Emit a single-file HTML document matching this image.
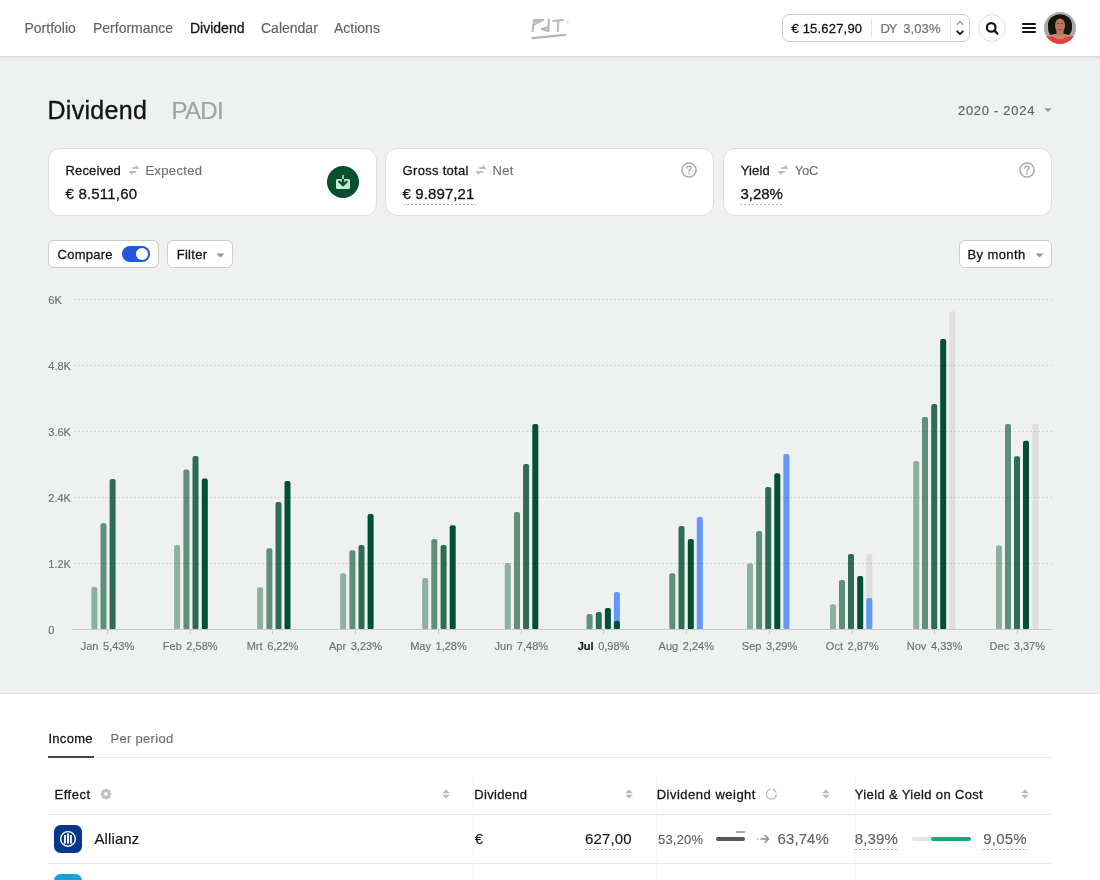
<!DOCTYPE html>
<html><head><meta charset="utf-8"><title>Dividend</title>
<style>
html,body{margin:0;padding:0;}
body{width:1100px;height:880px;overflow:hidden;position:relative;background:#fff;font-family:"Liberation Sans", sans-serif;}
.t{position:absolute;white-space:pre;line-height:1;font-family:"Liberation Sans", sans-serif;-webkit-text-stroke:0.15px currentColor;}
#root{position:absolute;left:0;top:0;width:1100px;height:880px;will-change:transform;}
</style></head><body><div id="root">
<div style="position:absolute;left:0px;top:0px;width:1100px;height:56px;background:#fff;"></div>
<div style="position:absolute;left:0px;top:56px;width:1100px;height:1px;background:#d7d9d9;"></div>
<div class="t" style="left:24.50px;top:21.15px;font-size:14px;color:#5c6368;font-weight:400;letter-spacing:0px;">Portfolio</div>
<div class="t" style="left:93.00px;top:21.15px;font-size:14px;color:#5c6368;font-weight:400;letter-spacing:0px;">Performance</div>
<div class="t" style="left:190.00px;top:21.15px;font-size:14px;color:#121416;font-weight:400;letter-spacing:0px;-webkit-text-stroke:0.28px currentColor;">Dividend</div>
<div class="t" style="left:261.00px;top:21.15px;font-size:14px;color:#5c6368;font-weight:400;letter-spacing:0px;">Calendar</div>
<div class="t" style="left:334.00px;top:21.15px;font-size:14px;color:#5c6368;font-weight:400;letter-spacing:0px;">Actions</div>
<svg style="position:absolute;left:525px;top:12px" width="50" height="32" viewBox="525 12 50 32" fill="none" stroke="#b3b6b7" stroke-width="1.9" stroke-linecap="round" stroke-linejoin="round">
<path d="M534 20.2 L532.6 31.2"/><path d="M534 20.1 L543.2 20 L533.4 24.9"/><path d="M535 21.3 L540 21" stroke-width="1.2"/>
<path d="M548.8 19.6 L548.4 31.2 L541.8 29 L548.4 26.9"/>
<path d="M553.4 21 L563.2 19.9"/><path d="M558.4 20.8 L557.7 31.3"/>
<path d="M532.4 38.1 L565.2 34.9" stroke-width="2.1"/>
<circle cx="567.8" cy="22" r="0.8" fill="#b3b6b7" stroke="none"/>
</svg>
<div style="position:absolute;left:782px;top:14px;width:186px;height:26px;border:1px solid #c9cbcc;border-radius:7px;background:#fff;"></div>
<div class="t" style="left:791.40px;top:21.90px;font-size:13px;color:#121416;font-weight:400;letter-spacing:0.2px;-webkit-text-stroke:0.28px currentColor;">€ 15.627,90</div>
<div style="position:absolute;left:871px;top:19px;width:1px;height:18px;background:#e3e4e5;"></div>
<div class="t" style="left:880.50px;top:21.90px;font-size:13px;color:#6a7176;font-weight:400;letter-spacing:-1.2px;">DY</div>
<div class="t" style="left:903.20px;top:21.90px;font-size:13px;color:#6a7176;font-weight:400;letter-spacing:0.1px;">3,03%</div>
<div style="position:absolute;left:950px;top:19px;width:1px;height:18px;background:#e3e4e5;"></div>
<svg style="position:absolute;left:955px;top:19px" width="10" height="18" viewBox="0 0 10 18" fill="none" stroke-linecap="round" stroke-linejoin="round">
<path d="M2.2 5.5 L5 2.6 L7.8 5.5" stroke="#9b9fa2" stroke-width="1.4"/>
<path d="M2.2 12.3 L5 15.2 L7.8 12.3" stroke="#111" stroke-width="1.8"/>
</svg>
<div style="position:absolute;left:978px;top:14px;width:26px;height:26px;border:1px solid #dcdede;border-radius:50%;background:#fff;"></div>
<svg style="position:absolute;left:984px;top:20px" width="16" height="16" viewBox="0 0 16 16" fill="none" stroke="#111" stroke-width="2.2" stroke-linecap="round">
<circle cx="7.2" cy="7.4" r="4.3"/><path d="M10.4 10.6 L13.4 13.6"/></svg>
<div style="position:absolute;left:1022px;top:23px;width:14px;height:2.2px;background:#111;border-radius:1px;"></div>
<div style="position:absolute;left:1022px;top:27px;width:14px;height:2.2px;background:#111;border-radius:1px;"></div>
<div style="position:absolute;left:1022px;top:31px;width:14px;height:2.2px;background:#111;border-radius:1px;"></div>
<svg style="position:absolute;left:1044px;top:12px" width="32" height="32" viewBox="0 0 32 32">
<defs><clipPath id="av"><circle cx="16" cy="16" r="16"/></clipPath><filter id="bl"><feGaussianBlur stdDeviation="0.5"/></filter></defs>
<g clip-path="url(#av)">
<rect width="32" height="32" fill="#a9a9a7"/>
<g filter="url(#bl)">
<path d="M4 14 Q3.5 4 15.5 2.2 Q27.5 3 28 13 Q28.5 20 25 23 L20 22 L12 22 L6 23 Q3.6 19 4 14Z" fill="#16120f"/>
<path d="M9 23 Q16 20.5 23 23 L26 33 L6 33Z" fill="#c58a6c"/>
<rect x="12.5" y="17" width="7" height="6" fill="#b97a5b"/>
<ellipse cx="16" cy="13.6" rx="5" ry="7.2" fill="#b8775a"/>
<path d="M13.3 11.3 L15 11.3 M17.2 11.3 L18.9 11.3" stroke="#3a2418" stroke-width="0.8"/>
<path d="M14.3 17.5 L17.7 17.5" stroke="#6e3f2f" stroke-width="0.8"/>
<path d="M0 24 L9 24.5 Q16 30 23 24.5 L32 24 L32 33 L0 33Z" fill="#e63c3e"/>
</g>
</g></svg>
<div style="position:absolute;left:0px;top:57px;width:1100px;height:636px;background:#eff0f0;"></div>
<div style="position:absolute;left:0px;top:57px;width:1100px;height:4px;background:linear-gradient(#e3e5e5,#eff0f0);"></div>
<div style="position:absolute;left:0px;top:693px;width:1100px;height:1px;background:#e2e4e4;"></div>
<div class="t" style="left:47.50px;top:97.84px;font-size:25px;color:#121416;font-weight:400;letter-spacing:0.3px;-webkit-text-stroke:0.35px currentColor;">Dividend</div>
<div class="t" style="left:171.50px;top:98.68px;font-size:24px;color:#9fa2a4;font-weight:400;letter-spacing:-0.7px;">PADI</div>
<div class="t" style="left:958.00px;top:104.00px;font-size:13px;color:#5c6368;font-weight:400;letter-spacing:0.7px;">2020 - 2024</div>
<svg style="position:absolute;left:1043px;top:107px" width="10" height="6" viewBox="0 0 10 6"><path d="M1 1.2 L9 1.2 L5 5Z" fill="#9c9fa1"/></svg>
<div style="position:absolute;left:48px;top:148px;width:328.5px;height:68px;box-sizing:border-box;border:1px solid #dcdedf;border-radius:12px;background:#fff;"></div>
<div style="position:absolute;left:385px;top:148px;width:328.5px;height:68px;box-sizing:border-box;border:1px solid #dcdedf;border-radius:12px;background:#fff;"></div>
<div style="position:absolute;left:723px;top:148px;width:329px;height:68px;box-sizing:border-box;border:1px solid #dcdedf;border-radius:12px;background:#fff;"></div>
<div class="t" style="left:65.50px;top:164.00px;font-size:13px;color:#121416;font-weight:400;letter-spacing:0.15px;-webkit-text-stroke:0.28px currentColor;">Received</div>
<svg style="position:absolute;left:129px;top:164.5px" width="11" height="11" viewBox="0 0 11 11" fill="#bcc0c2">
<path d="M3.2 1.9 L6.1 1.9 L7.2 0.1 L10 3 L10 3.9 L3.2 3.9Z"/>
<path d="M0.1 6.1 L6.8 6.1 L6.8 8 L3.9 8 L2.8 9.9 L0.1 7Z"/></svg>
<div class="t" style="left:145.40px;top:164.00px;font-size:13px;color:#6a7176;font-weight:400;letter-spacing:0.35px;">Expected</div>
<div class="t" style="left:65.50px;top:186.00px;font-size:15px;color:#121416;font-weight:400;letter-spacing:0.2px;-webkit-text-stroke:0.3px currentColor;">€ 8.511,60</div>
<svg style="position:absolute;left:327px;top:166px" width="32" height="32" viewBox="0 0 32 32">
<circle cx="16" cy="16" r="16" fill="#04502f"/>
<rect x="9" y="13" width="14" height="10" rx="1.6" fill="#c6ecd8"/>
<path d="M16 9.2 L16 19" stroke="#04502f" stroke-width="2.4"/>
<path d="M16 9 L16 13" stroke="#c6ecd8" stroke-width="1.5"/>
<path d="M12.3 15.6 L16 19.3 L19.7 15.6" fill="none" stroke="#04502f" stroke-width="2.2" stroke-linecap="round" stroke-linejoin="round"/>
</svg>
<div class="t" style="left:402.60px;top:164.00px;font-size:13px;color:#121416;font-weight:400;letter-spacing:0.3px;-webkit-text-stroke:0.28px currentColor;">Gross total</div>
<svg style="position:absolute;left:475.7px;top:164.5px" width="11" height="11" viewBox="0 0 11 11" fill="#bcc0c2">
<path d="M3.2 1.9 L6.1 1.9 L7.2 0.1 L10 3 L10 3.9 L3.2 3.9Z"/>
<path d="M0.1 6.1 L6.8 6.1 L6.8 8 L3.9 8 L2.8 9.9 L0.1 7Z"/></svg>
<div class="t" style="left:492.60px;top:164.00px;font-size:13px;color:#6a7176;font-weight:400;letter-spacing:0.3px;">Net</div>
<div class="t" style="left:402.60px;top:186.00px;font-size:15px;color:#121416;font-weight:400;letter-spacing:0.1px;-webkit-text-stroke:0.3px currentColor;">€ 9.897,21</div>
<div style="position:absolute;left:402.6px;top:204px;width:74px;height:1px;background-image:linear-gradient(90deg,#a9adaf 50%,transparent 50%);background-size:4px 1px;opacity:0.9;"></div>
<svg style="position:absolute;left:681px;top:162px" width="16" height="16" viewBox="0 0 16 16">
<circle cx="8" cy="8" r="7.1" fill="none" stroke="#a8acae" stroke-width="1.5"/>
<path d="M5.9 6.2 Q6 4.3 8 4.3 Q10.1 4.3 10.1 6 Q10.1 7.2 8.8 7.7 Q8 8.1 8 9.2" fill="none" stroke="#a8acae" stroke-width="1.4" stroke-linecap="round"/>
<circle cx="8" cy="11.5" r="0.9" fill="#a8acae"/></svg>
<div class="t" style="left:740.70px;top:164.00px;font-size:13px;color:#121416;font-weight:400;letter-spacing:0.15px;-webkit-text-stroke:0.28px currentColor;">Yield</div>
<svg style="position:absolute;left:777.8px;top:164.5px" width="11" height="11" viewBox="0 0 11 11" fill="#bcc0c2">
<path d="M3.2 1.9 L6.1 1.9 L7.2 0.1 L10 3 L10 3.9 L3.2 3.9Z"/>
<path d="M0.1 6.1 L6.8 6.1 L6.8 8 L3.9 8 L2.8 9.9 L0.1 7Z"/></svg>
<div class="t" style="left:794.80px;top:164.00px;font-size:13px;color:#6a7176;font-weight:400;letter-spacing:-0.2px;">YoC</div>
<div class="t" style="left:740.40px;top:186.00px;font-size:15px;color:#121416;font-weight:400;letter-spacing:0px;-webkit-text-stroke:0.3px currentColor;">3,28%</div>
<div style="position:absolute;left:740.4px;top:204px;width:44px;height:1px;background-image:linear-gradient(90deg,#a9adaf 50%,transparent 50%);background-size:4px 1px;opacity:0.9;"></div>
<svg style="position:absolute;left:1019px;top:162px" width="16" height="16" viewBox="0 0 16 16">
<circle cx="8" cy="8" r="7.1" fill="none" stroke="#a8acae" stroke-width="1.5"/>
<path d="M5.9 6.2 Q6 4.3 8 4.3 Q10.1 4.3 10.1 6 Q10.1 7.2 8.8 7.7 Q8 8.1 8 9.2" fill="none" stroke="#a8acae" stroke-width="1.4" stroke-linecap="round"/>
<circle cx="8" cy="11.5" r="0.9" fill="#a8acae"/></svg>
<div style="position:absolute;left:48px;top:240px;width:110.5px;height:27.5px;box-sizing:border-box;border:1px solid #c9cbcc;border-radius:6px;background:#fff;"></div>
<div class="t" style="left:57.60px;top:248.00px;font-size:13px;color:#121416;font-weight:400;letter-spacing:0.25px;-webkit-text-stroke:0.28px currentColor;">Compare</div>
<div style="position:absolute;left:121.6px;top:246px;width:28.2px;height:16px;background:#2157dd;border-radius:8px;"></div>
<div style="position:absolute;left:136.3px;top:248.3px;width:11.6px;height:11.6px;border-radius:50%;background:#fff;"></div>
<div style="position:absolute;left:167px;top:240px;width:66px;height:27.5px;box-sizing:border-box;border:1px solid #c9cbcc;border-radius:6px;background:#fff;"></div>
<div class="t" style="left:176.70px;top:248.00px;font-size:13px;color:#121416;font-weight:400;letter-spacing:0.3px;-webkit-text-stroke:0.28px currentColor;">Filter</div>
<svg style="position:absolute;left:215.5px;top:252.5px" width="9" height="5" viewBox="0 0 9 5"><path d="M0.5 0.5 L8.5 0.5 L4.5 4.6Z" fill="#929698"/></svg>
<div style="position:absolute;left:958.5px;top:240px;width:93px;height:27.5px;box-sizing:border-box;border:1px solid #c9cbcc;border-radius:6px;background:#fff;"></div>
<div class="t" style="left:967.50px;top:248.00px;font-size:13px;color:#121416;font-weight:400;letter-spacing:0.4px;-webkit-text-stroke:0.28px currentColor;">By month</div>
<svg style="position:absolute;left:1034.5px;top:252.8px" width="9" height="5" viewBox="0 0 9 5"><path d="M0.5 0.5 L8.5 0.5 L4.5 4.6Z" fill="#929698"/></svg>
<svg style="position:absolute;left:0;top:0" width="1100" height="880" viewBox="0 0 1100 880">
<rect x="91.4" y="587" width="6" height="42.8" rx="2" fill="#8eb0a1"/>
<rect x="100.5" y="523.2" width="6" height="106.6" rx="2" fill="#5f8f7b"/>
<rect x="109.6" y="479.1" width="6" height="150.7" rx="2" fill="#2f6c55"/>
<rect x="174.1" y="545" width="6" height="84.8" rx="2" fill="#8eb0a1"/>
<rect x="183.4" y="469.5" width="6" height="160.3" rx="2" fill="#5f8f7b"/>
<rect x="192.5" y="456" width="6" height="173.8" rx="2" fill="#2f6c55"/>
<rect x="201.8" y="478.6" width="6" height="151.2" rx="2" fill="#024f33"/>
<rect x="257.1" y="587.3" width="6" height="42.5" rx="2" fill="#8eb0a1"/>
<rect x="266.4" y="548.2" width="6" height="81.6" rx="2" fill="#5f8f7b"/>
<rect x="275.5" y="502" width="6" height="127.8" rx="2" fill="#2f6c55"/>
<rect x="284.5" y="481.1" width="6" height="148.7" rx="2" fill="#024f33"/>
<rect x="340.1" y="573.2" width="6" height="56.6" rx="2" fill="#8eb0a1"/>
<rect x="349.4" y="550.2" width="6" height="79.6" rx="2" fill="#5f8f7b"/>
<rect x="358.5" y="545" width="6" height="84.8" rx="2" fill="#2f6c55"/>
<rect x="367.6" y="513.9" width="6" height="115.9" rx="2" fill="#024f33"/>
<rect x="422.2" y="578" width="6" height="51.8" rx="2" fill="#8eb0a1"/>
<rect x="431.3" y="539" width="6" height="90.8" rx="2" fill="#5f8f7b"/>
<rect x="440.6" y="545" width="6" height="84.8" rx="2" fill="#2f6c55"/>
<rect x="449.7" y="525.2" width="6" height="104.6" rx="2" fill="#024f33"/>
<rect x="504.8" y="562.9" width="6" height="66.9" rx="2" fill="#8eb0a1"/>
<rect x="514" y="511.9" width="6" height="117.9" rx="2" fill="#5f8f7b"/>
<rect x="523.1" y="464.1" width="6" height="165.7" rx="2" fill="#2f6c55"/>
<rect x="532.3" y="423.9" width="6" height="205.9" rx="2" fill="#024f33"/>
<rect x="586.6" y="613.9" width="6" height="15.9" rx="2" fill="#5f8f7b"/>
<rect x="595.8" y="612" width="6" height="17.8" rx="2" fill="#2f6c55"/>
<rect x="604.9" y="608" width="6" height="21.8" rx="2" fill="#024f33"/>
<rect x="613.9" y="592.1" width="6" height="37.7" rx="2" fill="#6596fb"/>
<rect x="613.9" y="620.9" width="6" height="8.9" rx="2" fill="#024f33"/>
<rect x="669.3" y="573.2" width="6" height="56.6" rx="2" fill="#5f8f7b"/>
<rect x="678.5" y="525.9" width="6" height="103.9" rx="2" fill="#2f6c55"/>
<rect x="687.8" y="539" width="6" height="90.8" rx="2" fill="#024f33"/>
<rect x="696.8" y="517" width="6" height="112.8" rx="2" fill="#6596fb"/>
<rect x="747" y="563.2" width="6" height="66.6" rx="2" fill="#8eb0a1"/>
<rect x="756.1" y="531.1" width="6" height="98.7" rx="2" fill="#5f8f7b"/>
<rect x="765.2" y="487" width="6" height="142.8" rx="2" fill="#2f6c55"/>
<rect x="774.3" y="473.2" width="6" height="156.6" rx="2" fill="#024f33"/>
<rect x="783.4" y="454.1" width="6" height="175.7" rx="2" fill="#6596fb"/>
<rect x="830" y="604.2" width="6" height="25.6" rx="2" fill="#8eb0a1"/>
<rect x="839" y="580" width="6" height="49.8" rx="2" fill="#5f8f7b"/>
<rect x="848" y="554" width="6" height="75.8" rx="2" fill="#2f6c55"/>
<rect x="857.2" y="576" width="6" height="53.8" rx="2" fill="#024f33"/>
<rect x="866.3" y="554" width="6" height="75.8" rx="2" fill="#dededd"/>
<rect x="866.3" y="598" width="6" height="31.8" rx="2" fill="#6596fb"/>
<rect x="913.2" y="461" width="6" height="168.8" rx="2" fill="#8eb0a1"/>
<rect x="922" y="417" width="6" height="212.8" rx="2" fill="#5f8f7b"/>
<rect x="931.2" y="403.9" width="6" height="225.9" rx="2" fill="#2f6c55"/>
<rect x="940.2" y="338.9" width="6" height="290.9" rx="2" fill="#024f33"/>
<rect x="949.4" y="311.2" width="6" height="318.6" rx="2" fill="#dededd"/>
<rect x="996" y="545.4" width="6" height="84.4" rx="2" fill="#8eb0a1"/>
<rect x="1005" y="424.1" width="6" height="205.7" rx="2" fill="#5f8f7b"/>
<rect x="1014" y="456.3" width="6" height="173.5" rx="2" fill="#2f6c55"/>
<rect x="1023" y="440.8" width="6" height="189.0" rx="2" fill="#024f33"/>
<rect x="1032.5" y="424.1" width="6" height="205.7" rx="2" fill="#dededd"/>
<line x1="74" y1="299.5" x2="1052" y2="299.5" stroke="rgba(0,0,0,0.1)" stroke-width="1" stroke-dasharray="2 2"/>
<line x1="74" y1="365.5" x2="1052" y2="365.5" stroke="rgba(0,0,0,0.1)" stroke-width="1" stroke-dasharray="2 2"/>
<line x1="74" y1="431.5" x2="1052" y2="431.5" stroke="rgba(0,0,0,0.1)" stroke-width="1" stroke-dasharray="2 2"/>
<line x1="74" y1="497.5" x2="1052" y2="497.5" stroke="rgba(0,0,0,0.1)" stroke-width="1" stroke-dasharray="2 2"/>
<line x1="74" y1="563.5" x2="1052" y2="563.5" stroke="rgba(0,0,0,0.1)" stroke-width="1" stroke-dasharray="2 2"/>
<line x1="72" y1="629.5" x2="1052" y2="629.5" stroke="#c8caca" stroke-width="1"/>
<line x1="107.5" y1="630" x2="107.5" y2="634" stroke="#c8caca" stroke-width="1"/>
<line x1="190.2" y1="630" x2="190.2" y2="634" stroke="#c8caca" stroke-width="1"/>
<line x1="272.5" y1="630" x2="272.5" y2="634" stroke="#c8caca" stroke-width="1"/>
<line x1="355.5" y1="630" x2="355.5" y2="634" stroke="#c8caca" stroke-width="1"/>
<line x1="438.5" y1="630" x2="438.5" y2="634" stroke="#c8caca" stroke-width="1"/>
<line x1="521.3" y1="630" x2="521.3" y2="634" stroke="#c8caca" stroke-width="1"/>
<line x1="603.5" y1="630" x2="603.5" y2="634" stroke="#c8caca" stroke-width="1"/>
<line x1="686.3" y1="630" x2="686.3" y2="634" stroke="#c8caca" stroke-width="1"/>
<line x1="769.5" y1="630" x2="769.5" y2="634" stroke="#c8caca" stroke-width="1"/>
<line x1="852.3" y1="630" x2="852.3" y2="634" stroke="#c8caca" stroke-width="1"/>
<line x1="934.5" y1="630" x2="934.5" y2="634" stroke="#c8caca" stroke-width="1"/>
<line x1="1017.3" y1="630" x2="1017.3" y2="634" stroke="#c8caca" stroke-width="1"/>
</svg>
<div class="t" style="left:48.30px;top:294.69px;font-size:11px;color:#6a7176;font-weight:400;letter-spacing:0px;">6K</div>
<div class="t" style="left:48.30px;top:360.69px;font-size:11px;color:#6a7176;font-weight:400;letter-spacing:0px;">4.8K</div>
<div class="t" style="left:48.30px;top:426.69px;font-size:11px;color:#6a7176;font-weight:400;letter-spacing:0px;">3.6K</div>
<div class="t" style="left:48.30px;top:492.69px;font-size:11px;color:#6a7176;font-weight:400;letter-spacing:0px;">2.4K</div>
<div class="t" style="left:48.30px;top:558.69px;font-size:11px;color:#6a7176;font-weight:400;letter-spacing:0px;">1.2K</div>
<div class="t" style="left:48.30px;top:624.69px;font-size:11px;color:#6a7176;font-weight:400;letter-spacing:0px;">0</div>
<div class="t" style="left:47.5px;width:120px;text-align:center;top:640.69px;font-size:11px;color:#6a7176;white-space:pre"><span style="color:#6a7176;font-weight:400">Jan</span><span style="margin-left:4.6px">5,43%</span></div>
<div class="t" style="left:130.2px;width:120px;text-align:center;top:640.69px;font-size:11px;color:#6a7176;white-space:pre"><span style="color:#6a7176;font-weight:400">Feb</span><span style="margin-left:4.6px">2,58%</span></div>
<div class="t" style="left:212.5px;width:120px;text-align:center;top:640.69px;font-size:11px;color:#6a7176;white-space:pre"><span style="color:#6a7176;font-weight:400">Mrt</span><span style="margin-left:4.6px">6,22%</span></div>
<div class="t" style="left:295.5px;width:120px;text-align:center;top:640.69px;font-size:11px;color:#6a7176;white-space:pre"><span style="color:#6a7176;font-weight:400">Apr</span><span style="margin-left:4.6px">3,23%</span></div>
<div class="t" style="left:378.5px;width:120px;text-align:center;top:640.69px;font-size:11px;color:#6a7176;white-space:pre"><span style="color:#6a7176;font-weight:400">May</span><span style="margin-left:4.6px">1,28%</span></div>
<div class="t" style="left:461.29999999999995px;width:120px;text-align:center;top:640.69px;font-size:11px;color:#6a7176;white-space:pre"><span style="color:#6a7176;font-weight:400">Jun</span><span style="margin-left:4.6px">7,48%</span></div>
<div class="t" style="left:543.5px;width:120px;text-align:center;top:640.69px;font-size:11px;color:#6a7176;white-space:pre"><span style="color:#121416;font-weight:700">Jul</span><span style="margin-left:4.6px">0,98%</span></div>
<div class="t" style="left:626.3px;width:120px;text-align:center;top:640.69px;font-size:11px;color:#6a7176;white-space:pre"><span style="color:#6a7176;font-weight:400">Aug</span><span style="margin-left:4.6px">2,24%</span></div>
<div class="t" style="left:709.5px;width:120px;text-align:center;top:640.69px;font-size:11px;color:#6a7176;white-space:pre"><span style="color:#6a7176;font-weight:400">Sep</span><span style="margin-left:4.6px">3,29%</span></div>
<div class="t" style="left:792.3px;width:120px;text-align:center;top:640.69px;font-size:11px;color:#6a7176;white-space:pre"><span style="color:#6a7176;font-weight:400">Oct</span><span style="margin-left:4.6px">2,87%</span></div>
<div class="t" style="left:874.5px;width:120px;text-align:center;top:640.69px;font-size:11px;color:#6a7176;white-space:pre"><span style="color:#6a7176;font-weight:400">Nov</span><span style="margin-left:4.6px">4,33%</span></div>
<div class="t" style="left:957.3px;width:120px;text-align:center;top:640.69px;font-size:11px;color:#6a7176;white-space:pre"><span style="color:#6a7176;font-weight:400">Dec</span><span style="margin-left:4.6px">3,37%</span></div>
<div style="position:absolute;left:0px;top:694px;width:1100px;height:186px;background:#fff;"></div>
<div class="t" style="left:48.40px;top:732.20px;font-size:13px;color:#121416;font-weight:400;letter-spacing:0.3px;-webkit-text-stroke:0.28px currentColor;">Income</div>
<div class="t" style="left:110.50px;top:732.20px;font-size:13px;color:#6a7176;font-weight:400;letter-spacing:0.3px;">Per period</div>
<div style="position:absolute;left:48px;top:757px;width:1004px;height:1px;background:#e4e6e6;"></div>
<div style="position:absolute;left:48px;top:756px;width:46px;height:2px;background:#41474c;"></div>
<div style="position:absolute;left:473px;top:773.5px;width:1px;height:110px;background:#fdf3f5;"></div>
<div style="position:absolute;left:656px;top:773.5px;width:1px;height:110px;background:#fdf3f5;"></div>
<div style="position:absolute;left:854.5px;top:773.5px;width:1px;height:110px;background:#fdf3f5;"></div>
<div class="t" style="left:54.50px;top:788.00px;font-size:13px;color:#121416;font-weight:400;letter-spacing:0.5px;-webkit-text-stroke:0.28px currentColor;">Effect</div>
<svg style="position:absolute;left:100px;top:788px" width="12" height="12" viewBox="0 0 12 12"><path fill="#bcc0c2" fill-rule="evenodd" d="M6.00 0.00 L7.72 1.84 L10.24 1.76 L10.16 4.28 L12.00 6.00 L10.16 7.72 L10.24 10.24 L7.72 10.16 L6.00 12.00 L4.28 10.16 L1.76 10.24 L1.84 7.72 L0.00 6.00 L1.84 4.28 L1.76 1.76 L4.28 1.84Z M6 4.1 A1.9 1.9 0 1 0 6 7.9 A1.9 1.9 0 1 0 6 4.1Z"/></svg>
<svg style="position:absolute;left:442px;top:789.2px" width="8" height="10" viewBox="0 0 8 10"><path d="M0.3 4.2 L4 0.3 L7.7 4.2Z M0.3 5.8 L7.7 5.8 L4 9.7Z" fill="#b9bcbe"/></svg>
<div class="t" style="left:474.30px;top:788.00px;font-size:13px;color:#121416;font-weight:400;letter-spacing:0.3px;-webkit-text-stroke:0.28px currentColor;">Dividend</div>
<svg style="position:absolute;left:624.6px;top:789.2px" width="8" height="10" viewBox="0 0 8 10"><path d="M0.3 4.2 L4 0.3 L7.7 4.2Z M0.3 5.8 L7.7 5.8 L4 9.7Z" fill="#b9bcbe"/></svg>
<div class="t" style="left:656.70px;top:788.00px;font-size:13px;color:#121416;font-weight:400;letter-spacing:0.5px;-webkit-text-stroke:0.28px currentColor;">Dividend weight</div>
<svg style="position:absolute;left:765px;top:788px" width="13" height="13" viewBox="0 0 13 13" fill="none" stroke="#bfc3c5" stroke-width="1.6"><path d="M11.29 6.36 A4.9 4.9 0 1 1 5.72 1.25"/><path d="M7.91 1.44 A4.9 4.9 0 0 1 11.06 4.59"/></svg>
<svg style="position:absolute;left:822.2px;top:789.2px" width="8" height="10" viewBox="0 0 8 10"><path d="M0.3 4.2 L4 0.3 L7.7 4.2Z M0.3 5.8 L7.7 5.8 L4 9.7Z" fill="#b9bcbe"/></svg>
<div class="t" style="left:854.80px;top:788.00px;font-size:13px;color:#121416;font-weight:400;letter-spacing:0.35px;-webkit-text-stroke:0.28px currentColor;">Yield &amp; Yield on Cost</div>
<svg style="position:absolute;left:1020.5px;top:789.2px" width="8" height="10" viewBox="0 0 8 10"><path d="M0.3 4.2 L4 0.3 L7.7 4.2Z M0.3 5.8 L7.7 5.8 L4 9.7Z" fill="#b9bcbe"/></svg>
<div style="position:absolute;left:48px;top:814px;width:1004px;height:1px;background:#dfe1e2;"></div>
<svg style="position:absolute;left:54px;top:825px" width="28" height="28" viewBox="0 0 28 28">
<rect width="28" height="28" rx="6.5" fill="#05378c"/>
<circle cx="14" cy="13.9" r="7.3" fill="none" stroke="#fff" stroke-width="1.4"/>
<rect x="10.1" y="10" width="1.8" height="8.6" fill="#fff"/><rect x="13.05" y="8.4" width="1.9" height="10.2" fill="#fff"/><rect x="16" y="10" width="1.8" height="8.6" fill="#fff"/>
</svg>
<div class="t" style="left:94.50px;top:830.90px;font-size:15px;color:#121416;font-weight:400;letter-spacing:0.1px;">Allianz</div>
<div class="t" style="left:474.70px;top:830.90px;font-size:15px;color:#121416;font-weight:400;letter-spacing:0px;">€</div>
<div class="t" style="left:585.00px;top:830.90px;font-size:15px;color:#121416;font-weight:400;letter-spacing:0.15px;">627,00</div>
<div style="position:absolute;left:585px;top:849px;width:47px;height:1px;background-image:linear-gradient(90deg,#a9adaf 50%,transparent 50%);background-size:4px 1px;opacity:0.9;"></div>
<div class="t" style="left:658.00px;top:832.70px;font-size:13px;color:#5c6368;font-weight:400;letter-spacing:0.2px;">53,20%</div>
<div style="position:absolute;left:716.4px;top:836.5px;width:28.6px;height:4.4px;background:#525a5e;border-radius:2.2px;"></div>
<div style="position:absolute;left:736px;top:831px;width:9px;height:1.7px;background:#a7abad;"></div>
<svg style="position:absolute;left:756px;top:834px" width="14" height="10" viewBox="0 0 14 10" fill="none" stroke="#8d9194" stroke-width="1.5" stroke-linecap="round" stroke-linejoin="round"><path d="M1.6 5 L1.8 5"/><path d="M5 5 L12.5 5 M9.2 1.6 L12.6 5 L9.2 8.4"/></svg>
<div class="t" style="left:777.50px;top:831.00px;font-size:15px;color:#5c6368;font-weight:400;letter-spacing:0.1px;">63,74%</div>
<div class="t" style="left:854.80px;top:831.00px;font-size:15px;color:#5c6368;font-weight:400;letter-spacing:0.15px;">8,39%</div>
<div style="position:absolute;left:854.8px;top:849px;width:44px;height:1px;background-image:linear-gradient(90deg,#a9adaf 50%,transparent 50%);background-size:4px 1px;opacity:0.9;"></div>
<div style="position:absolute;left:911.5px;top:837px;width:59px;height:4px;background:#e4e6e6;border-radius:2px;"></div>
<div style="position:absolute;left:931px;top:837px;width:40px;height:4px;background:#1fa872;border-radius:2px;"></div>
<div class="t" style="left:983.30px;top:831.00px;font-size:15px;color:#5c6368;font-weight:400;letter-spacing:0.2px;">9,05%</div>
<div style="position:absolute;left:983.3px;top:849px;width:45px;height:1px;background-image:linear-gradient(90deg,#a9adaf 50%,transparent 50%);background-size:4px 1px;opacity:0.9;"></div>
<div style="position:absolute;left:48px;top:863px;width:1004px;height:1px;background:#e6e8e8;"></div>
<div style="position:absolute;left:54px;top:874px;width:28px;height:28px;border-radius:6.5px;background:#12a3dc;"></div>
</div></body></html>
